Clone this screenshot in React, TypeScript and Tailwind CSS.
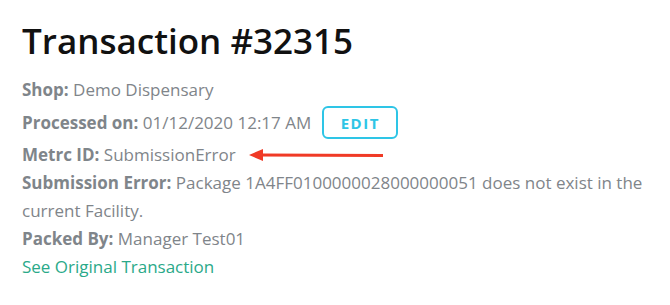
export default function App() {
  return (
    <div
      className="w-[670px] h-[305px] bg-white pl-[22px] pt-[18px] text-[17px] text-[#7f858a]"
      style={{ fontFamily: '"Open Sans", "Noto Sans", sans-serif' }}
    >
      <h1 className="text-[35px] leading-[46px] font-semibold text-[#111111] mb-[12px]">Transaction #32315</h1>
      <div className="leading-[28px]">
        <div>
          <span className="font-bold">Shop:</span> Demo Dispensary
        </div>
        <div className="flex items-center h-[37px]">
          <span>
            <span className="font-bold">Processed on:</span> 01/12/2020 12:17 AM
          </span>
          <button className="ml-[11px] h-[33px] w-[76px] rounded-[6px] border-2 border-[#2ec5e6] text-[#2ec5e6] text-[15px] font-bold tracking-[1.5px] flex items-center justify-center">
            EDIT
          </button>
        </div>
        <div className="flex items-center">
          <span>
            <span className="font-bold">Metrc ID:</span> SubmissionError
          </span>
          <svg width="136" height="12" viewBox="0 0 136 12" className="ml-[13px]">
            <polygon points="0,6 14,0 14,12" fill="#f03a26" />
            <line x1="12" y1="6" x2="134" y2="6.5" stroke="#f03a26" strokeWidth="3" />
          </svg>
        </div>
        <div className="w-[630px]">
          <span className="font-bold">Submission Error:</span> Package 1A4FF0100000028000000051 does not exist in the current Facility.
        </div>
        <div>
          <span className="font-bold">Packed By:</span> Manager Test01
        </div>
        <div className="text-[#2aa989]">See Original Transaction</div>
      </div>
    </div>
  );
}
